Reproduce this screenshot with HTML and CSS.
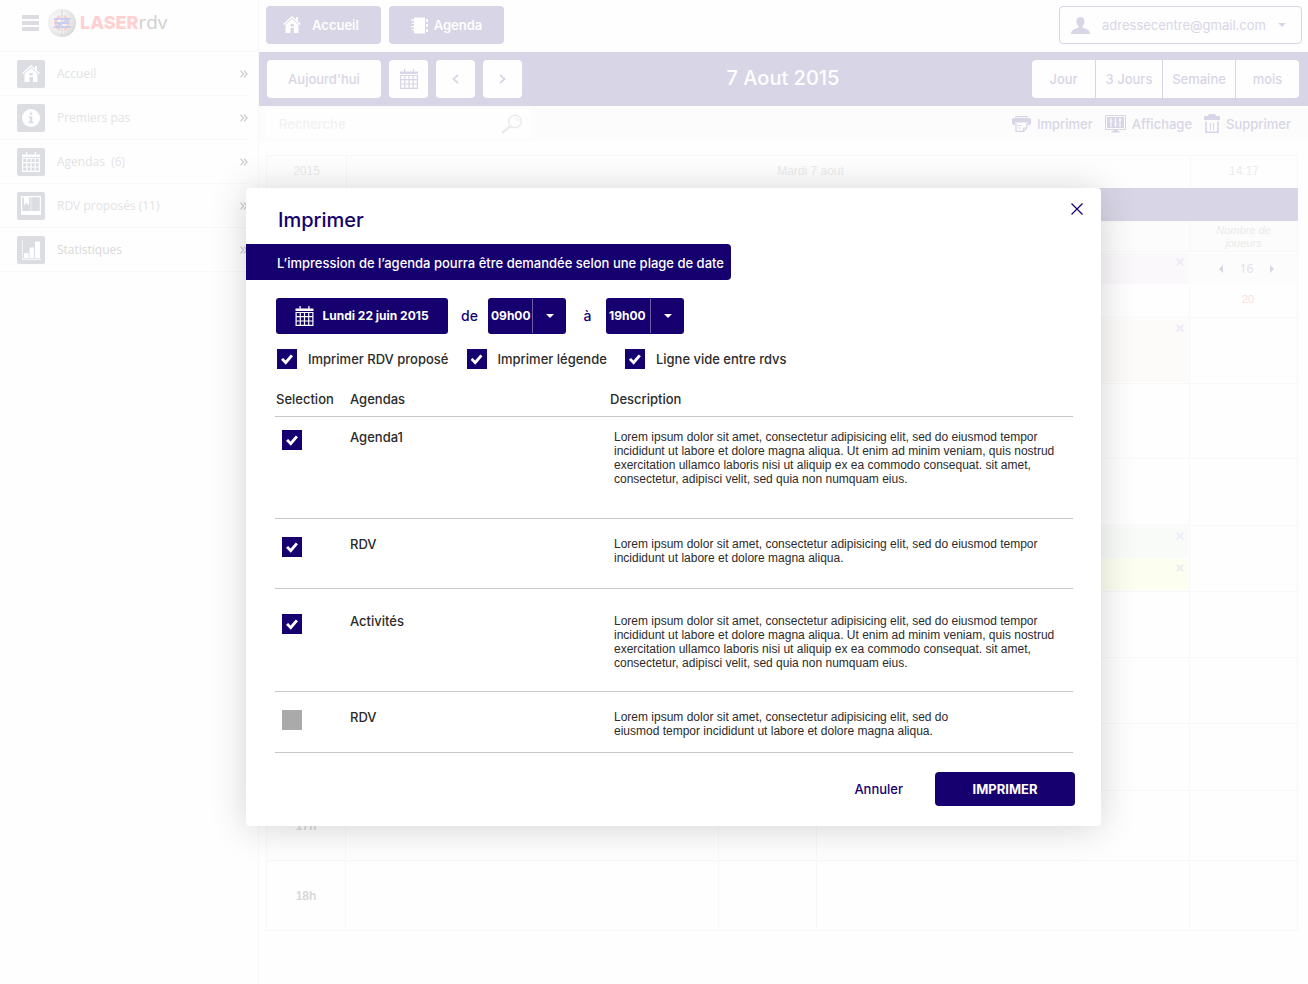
FILE: index.html
```html
<!DOCTYPE html>
<html lang="fr">
<head>
<meta charset="utf-8">
<meta name="viewport" content="width=device-width, initial-scale=1">
<title>LASERrdv – Agenda</title>
<link rel="stylesheet" href="styles.css">
</head>
<body>
<svg class="sprite" aria-hidden="true">
  <symbol id="i-home" viewBox="0 0 18 18">
    <path fill="none" stroke="currentColor" stroke-width="1.4" d="M.6 8.6 9 1l8.400 7.600"/>
    <path fill="currentColor" fill-rule="evenodd" d="M13 1h2v4.500l-2-1.800zM9 3l6.500 5.800V17H11v-5H7.500v5H2.500V8.800zM7.600 8v2.600h3.200V8z"/>
  </symbol>
  <symbol id="i-info" viewBox="0 0 18 18">
    <circle cx="9" cy="9" r="9" fill="currentColor"/>
    <path class="cut" d="M7.800 3.500h2.400v2.300H7.800zM6.500 7.200h3.800v5.600h1.200v1.400h-5v-1.400h1.200V8.600H6.500z"/>
  </symbol>
  <symbol id="i-cal" viewBox="0 0 18 20">
    <path fill="currentColor" d="M4 0h1.200v3H4zM12.800 0H14v3h-1.200zM0 2.500h18V5H0z"/>
    <path fill="none" stroke="currentColor" stroke-width="1.200" d="M.6 6.500h16.800v12.900H.6zM4.800 6.500v13M9 6.500v13M13.200 6.500v13M.6 10.700h16.800M.6 15h16.800"/>
  </symbol>
  <symbol id="i-book" viewBox="0 0 20 19">
    <path fill="none" stroke="currentColor" stroke-width="1.200" d="M.6.6h18.800v17.800H.6z"/>
    <path fill="currentColor" d="M3 1h5v8.500L5.500 7 3 9.500zM1 15h18v3H1z"/>
    <path stroke="currentColor" stroke-width="1" opacity=".6" d="M10 1v14"/>
  </symbol>
  <symbol id="i-chart" viewBox="0 0 19 20">
    <path fill="none" stroke="currentColor" stroke-dasharray="1.500 1" d="M.5 0v19"/>
    <path fill="currentColor" d="M2 13h4.500v5H2zM7.500 7.500H12V18H7.500zM13 1.500h5V18h-5zM0 18.800h19v1H0z"/>
  </symbol>
  <symbol id="i-note" viewBox="0 0 18 17">
    <path fill="currentColor" d="M3 .5h11v16H3zM0 2.500h5v1.200H0zM1 5.800h4V7H1zM0 9h5v1.200H0zM1 12.300h4v1.200H1zM15 2h2v3h-2zM15 7h2v3h-2zM15 12h2v3h-2z"/>
  </symbol>
  <symbol id="i-user" viewBox="0 0 19 17">
    <path fill="currentColor" d="M9.500 0c2.500 0 4 1.700 4 4.300 0 2.200-.8 4-2 5v1.500c2.800.8 7.500 1.700 7.500 6.200H0c0-4.500 4.700-5.400 7.500-6.200V9.300c-1.200-1-2-2.800-2-5C5.500 1.700 7 0 9.500 0z"/>
  </symbol>
  <symbol id="i-search" viewBox="0 0 22 20">
    <circle cx="14" cy="7.500" r="6.300" fill="none" stroke="currentColor" stroke-width="1.500"/>
    <path fill="none" stroke="currentColor" d="M14 4a3.500 3.500 0 0 1 3.500 3.500"/>
    <path stroke="currentColor" stroke-width="2.600" stroke-linecap="round" d="M9 12.500 2 18"/>
  </symbol>
  <symbol id="i-print" viewBox="0 0 19 16">
    <path fill="currentColor" d="M3 0h13v1.300H3zM1 2h17l1 1v4.500L17.500 9H16V6.500H3V9H1.500L0 7.500V3z"/>
    <path fill="none" stroke="currentColor" stroke-width="1.200" d="M4 7v8.400h7.500L15 12V7M15 12h-3.500v3.400M5.500 9.500h4M5.500 12h3"/>
  </symbol>
  <symbol id="i-screen" viewBox="0 0 21 18">
    <path fill="none" stroke="currentColor" d="M.5.5h20v14H.5z"/>
    <path fill="currentColor" d="M2 2h17v11H2zM8.500 14.500h4V16h2v1.500h-8V16h2z"/>
    <path stroke="#fcfcfc" stroke-width="1.200" d="M6 3v9M10.500 3v9M15 3v9M4.500 6h3M9 9h3M13.500 5h3"/>
  </symbol>
  <symbol id="i-trash" viewBox="0 0 16 19">
    <path fill="currentColor" d="M5 0h6l1 2h3l1 1v3H0V3l1-1h3z"/>
    <path fill="none" stroke="currentColor" stroke-width="1.600" d="M2 7.500v10.700h12V7.500"/>
    <path fill="none" stroke="currentColor" d="M6.500 9v7M9.500 9v7"/>
  </symbol>
  <symbol id="i-chevrons" viewBox="0 0 8 8">
    <path fill="none" stroke="currentColor" stroke-width="1.400" d="m.6.600 3 3.400-3 3.400M4 .6 7 4 4 7.400"/>
  </symbol>
  <symbol id="i-left" viewBox="0 0 7 10"><path fill="none" stroke="currentColor" stroke-width="1.800" d="M6 .8 1.500 5 6 9.200"/></symbol>
  <symbol id="i-right" viewBox="0 0 7 10"><path fill="none" stroke="currentColor" stroke-width="1.800" d="M1 .8 5.500 5 1 9.200"/></symbol>
  <symbol id="i-caret" viewBox="0 0 8 4"><path fill="currentColor" d="M0 0h8L4 4z"/></symbol>
  <symbol id="i-x" viewBox="0 0 8 8"><path fill="none" stroke="currentColor" stroke-width="1.800" d="m.6.600 6.800 6.800M7.400.6.6 7.400"/></symbol>
</svg>

<div class="app">
  <aside class="sidebar">
    <div class="brand">
      <button class="burger" type="button" aria-label="Menu"><span></span><span></span><span></span></button>
      <svg class="brand-mark" viewBox="0 0 28 28" aria-hidden="true">
        <defs><radialGradient id="ball" cx=".35" cy=".4" r=".7"><stop offset="0" stop-color="#fafafa"/><stop offset=".6" stop-color="#ececec"/><stop offset="1" stop-color="#d6d6d6"/></radialGradient></defs>
        <circle cx="14" cy="14" r="14" fill="url(#ball)"/>
        <circle cx="14" cy="14" r="6.500" fill="none" stroke="#f9cfcf" stroke-width="3"/>
        <path stroke="#fafafa" stroke-width="3" d="M14 3v22"/>
        <path stroke="#cdcdd4" stroke-width="1" d="M14 2v24"/>
        <path fill="none" stroke="#c9cdf0" stroke-width="2" d="M6 10h15L8 18h15M7 14h14"/>
      </svg>
      <span class="brand-name"><b>LASER</b>rdv</span>
    </div>
    <nav>
      <a class="nav-item" href="#"><span class="nav-icon"><svg width="18" height="18"><use href="#i-home"/></svg></span><span>Accueil</span><svg class="more" width="8" height="8"><use href="#i-chevrons"/></svg></a>
      <a class="nav-item" href="#"><span class="nav-icon"><svg width="18" height="18"><use href="#i-info"/></svg></span><span>Premiers pas</span><svg class="more" width="8" height="8"><use href="#i-chevrons"/></svg></a>
      <a class="nav-item" href="#"><span class="nav-icon"><svg width="18" height="20"><use href="#i-cal"/></svg></span><span>Agendas&nbsp; (6)</span><svg class="more" width="8" height="8"><use href="#i-chevrons"/></svg></a>
      <a class="nav-item" href="#"><span class="nav-icon"><svg width="20" height="19"><use href="#i-book"/></svg></span><span>RDV proposés (11)</span><svg class="more" width="8" height="8"><use href="#i-chevrons"/></svg></a>
      <a class="nav-item current" href="#"><span class="nav-icon"><svg width="19" height="20"><use href="#i-chart"/></svg></span><span>Statistiques</span><svg class="more" width="8" height="8"><use href="#i-chevrons"/></svg></a>
    </nav>
  </aside>

  <main class="main">
    <header class="topbar">
      <button class="tab" type="button"><svg width="18" height="18"><use href="#i-home"/></svg>Accueil</button>
      <button class="tab" type="button"><svg width="18" height="17"><use href="#i-note"/></svg>Agenda</button>
      <button class="account" type="button"><svg width="19" height="17"><use href="#i-user"/></svg><span>adressecentre@gmail.com</span><svg width="8" height="4"><use href="#i-caret"/></svg></button>
    </header>

    <div class="datebar">
      <div class="date-nav">
        <button class="today" type="button">Aujourd'hui</button>
        <button class="square" type="button" aria-label="Calendrier"><svg width="18" height="20"><use href="#i-cal"/></svg></button>
        <button class="square" type="button" aria-label="Précédent"><svg width="7" height="10"><use href="#i-left"/></svg></button>
        <button class="square" type="button" aria-label="Suivant"><svg width="7" height="10"><use href="#i-right"/></svg></button>
      </div>
      <h1>7 Aout 2015</h1>
      <div class="views">
        <button type="button">Jour</button><button type="button">3 Jours</button><button type="button">Semaine</button><button type="button">mois</button>
      </div>
    </div>

    <div class="tools">
      <label class="search"><input type="text" placeholder="Recherche" aria-label="Recherche"><svg width="22" height="20"><use href="#i-search"/></svg></label>
      <div class="actions">
        <button type="button"><svg width="19" height="16"><use href="#i-print"/></svg>Imprimer</button>
        <button type="button"><svg width="21" height="18"><use href="#i-screen"/></svg>Affichage</button>
        <button type="button"><svg width="16" height="19"><use href="#i-trash"/></svg>Supprimer</button>
      </div>
    </div>

    <div class="planner">
      <div class="day-head"><span>2015</span><span class="day">Mardi 7 aout</span><span>14:17</span></div>
      <div class="day-band"></div>
      <table class="slots">
        <colgroup><col class="c-hour"><col><col class="c-mid"><col><col class="c-count"></colgroup>
        <thead><tr><th></th><th></th><th></th><th></th><th>Nombre de joueurs</th></tr></thead>
        <tbody>
          <tr class="h66"><td></td><td></td><td></td><td><div class="event lilac"><svg width="8" height="8"><use href="#i-x"/></svg></div></td>
            <td><div class="stepper"><button type="button" aria-label="Moins"><svg width="4" height="8" viewBox="0 0 4 8"><path fill="currentColor" d="M4 0v8L0 4z"/></svg></button>16<button type="button" aria-label="Plus"><svg width="4" height="8" viewBox="0 0 4 8"><path fill="currentColor" d="M0 0v8l4-4z"/></svg></button></div><div class="limit">20</div></td></tr>
          <tr class="h66"><td></td><td></td><td></td><td><div class="event tall sand"><svg width="8" height="8"><use href="#i-x"/></svg></div></td><td></td></tr>
          <tr class="h75"><td></td><td></td><td></td><td></td><td></td></tr>
          <tr class="h67"><td></td><td></td><td></td><td></td><td></td></tr>
          <tr class="h66"><td></td><td></td><td></td><td><div class="event mint"><svg width="8" height="8"><use href="#i-x"/></svg></div><div class="event lemon"><svg width="8" height="8"><use href="#i-x"/></svg></div></td><td></td></tr>
          <tr class="h66"><td></td><td></td><td></td><td></td><td></td></tr>
          <tr class="h66"><td></td><td></td><td></td><td></td><td></td></tr>
          <tr class="h67"><td></td><td></td><td></td><td></td><td></td></tr>
          <tr class="h70"><td class="hour">17h</td><td></td><td></td><td></td><td></td></tr>
          <tr class="h70"><td class="hour">18h</td><td></td><td></td><td></td><td></td></tr>
        </tbody>
      </table>
    </div>
  </main>
</div>

<div class="layer">
  <form class="modal" role="dialog" aria-labelledby="modal-title">
    <div class="modal-head">
      <h2 id="modal-title">Imprimer</h2>
      <button class="close" type="button" aria-label="Fermer"><svg width="12" height="12" viewBox="0 0 12 12"><path fill="none" stroke="currentColor" stroke-width="1.200" d="m.5.500 11 11M11.500.5l-11 11"/></svg></button>
    </div>
    <p class="banner">L’impression de l’agenda pourra être demandée selon une plage de date</p>
    <div class="range">
      <button class="date" type="button"><svg width="19" height="20"><use href="#i-cal"/></svg>Lundi 22 juin 2015</button>
      <label for="from">de</label>
      <span class="time"><select id="from"><option>09h00</option></select><span class="drop"><svg width="8" height="4"><use href="#i-caret"/></svg></span></span>
      <label for="to">à</label>
      <span class="time"><select id="to"><option>19h00</option></select><span class="drop"><svg width="8" height="4"><use href="#i-caret"/></svg></span></span>
    </div>
    <div class="options">
      <label><input class="check" type="checkbox" checked>Imprimer RDV proposé</label>
      <label><input class="check" type="checkbox" checked>Imprimer légende</label>
      <label><input class="check" type="checkbox" checked>Ligne vide entre rdvs</label>
    </div>
    <table class="list">
      <colgroup><col class="l-sel"><col class="l-name"><col></colgroup>
      <thead><tr><th>Selection</th><th>Agendas</th><th>Description</th></tr></thead>
      <tbody>
        <tr class="first"><td class="sel"><input class="check" id="a1" type="checkbox" checked></td><td><label for="a1">Agenda1</label></td><td class="desc">Lorem ipsum dolor sit amet, consectetur adipisicing elit, sed do eiusmod tempor incididunt ut labore et dolore magna aliqua. Ut enim ad minim veniam, quis nostrud exercitation ullamco laboris nisi ut aliquip ex ea commodo consequat. sit amet, consectetur, adipisci velit, sed quia non numquam eius.</td></tr>
        <tr class="second"><td class="sel"><input class="check" id="a2" type="checkbox" checked></td><td><label for="a2">RDV</label></td><td class="desc">Lorem ipsum dolor sit amet, consectetur adipisicing elit, sed do eiusmod tempor incididunt ut labore et dolore magna aliqua.</td></tr>
        <tr class="third"><td class="sel"><input class="check" id="a3" type="checkbox" checked></td><td><label for="a3">Activités</label></td><td class="desc">Lorem ipsum dolor sit amet, consectetur adipisicing elit, sed do eiusmod tempor incididunt ut labore et dolore magna aliqua. Ut enim ad minim veniam, quis nostrud exercitation ullamco laboris nisi ut aliquip ex ea commodo consequat. sit amet, consectetur, adipisci velit, sed quia non numquam eius.</td></tr>
        <tr class="fourth"><td class="sel"><input class="check" id="a4" type="checkbox"></td><td><label for="a4">RDV</label></td><td class="desc narrow">Lorem ipsum dolor sit amet, consectetur adipisicing elit, sed do eiusmod tempor incididunt ut labore et dolore magna aliqua.</td></tr>
      </tbody>
    </table>
    <div class="modal-foot">
      <button class="cancel" type="button">Annuler</button>
      <button class="submit" type="submit">IMPRIMER</button>
    </div>
  </form>
</div>
</body>
</html>
```
FILE: styles.css
```css
:root {
  --navy: #16006f;
  --haze: #d8d5e6;
  --line: #f8f8f8;
}
* { box-sizing: border-box; }
body {
  margin: 0;
  min-height: 100vh;
  position: relative;
  background: #fefefe;
  font: 500 13px/16px Inter, "Liberation Sans", sans-serif;
}
button, input, select { font: inherit; color: inherit; }
button { border: 0; padding: 0; background: none; cursor: pointer; }
svg { display: block; flex: none; }
a { text-decoration: none; }
.sprite { position: absolute; width: 0; height: 0; }

.app { display: flex; min-height: 100vh; }

/* Sidebar */
.sidebar { width: 259px; flex: none; border-right: 1px solid var(--line); }
.brand { display: flex; align-items: center; height: 52px; padding: 0 0 6px 22px; border-bottom: 1px solid var(--line); }
.burger { display: grid; gap: 2px; width: 17px; margin-right: 9px; }
.burger span { height: 4px; background: #dcdde2; }
.brand-mark { width: 28px; height: 28px; margin-right: 4px; }
.brand-name { color: #cfcfcf; font: 400 19px/24px "Open Sans", sans-serif; }
.brand-name b { color: #ffd0d0; font: 800 18px/24px Inter, sans-serif; }
.nav-item {
  display: flex; align-items: center; height: 44px; margin-right: 8px; padding: 0 2px 0 17px;
  border-bottom: 1px solid var(--line); color: #e3e3e3; font: 400 12px/16px "Open Sans", sans-serif;
}
.nav-item.current { color: #d8d8d8; }
.nav-icon {
  display: flex; align-items: center; justify-content: center; width: 28px; height: 28px;
  margin-right: 12px; border-radius: 2px; background: #dcdde2; color: #fefefe;
}
.cut { fill: #dcdde2; }
.more { margin-left: auto; color: #cfcfcf; }

/* Top bars */
.main { flex: 1; min-width: 0; }
.topbar { display: flex; gap: 8px; height: 52px; padding: 6px 6px 8px 7px; }
.tab {
  display: flex; align-items: center; justify-content: center; gap: 11px; width: 115px; padding-right: 5px;
  border-radius: 4px; background: var(--haze); color: #fefefe; font-weight: 600;
}
.tab + .tab { gap: 5px; padding-right: 0; }
.account {
  display: flex; align-items: center; gap: 12px; width: 243px; margin-left: auto; padding: 0 16px 0 11px;
  border: 1px solid var(--haze); border-radius: 4px; color: var(--haze);
}
.account span { flex: 1; text-align: left; font-weight: 400; }
.datebar {
  display: grid; grid-template-columns: 1fr auto 1fr; align-items: center;
  height: 54px; padding: 0 9px 0 8px; background: var(--haze); color: var(--haze);
}
.date-nav { display: flex; gap: 8px; }
.date-nav button { display: flex; align-items: center; justify-content: center; height: 38px; border-radius: 4px; background: #fefefe; }
.date-nav .today { width: 114px; }
.date-nav .square { width: 39px; }
.datebar h1 { margin: 0; padding-bottom: 3px; color: #fefefe; font: 500 20px/24px Inter, sans-serif; }
.views { display: flex; gap: 1px; justify-self: end; border-radius: 4px; overflow: hidden; }
.views button { width: 63px; height: 38px; background: #fefefe; }
.views button:nth-child(2) { width: 66px; }
.views button:nth-child(3) { width: 72px; }
.tools { display: flex; align-items: center; justify-content: space-between; height: 35px; padding: 0 17px 0 7px; background: #fcfcfc; }
.search { display: flex; align-items: center; width: 266px; height: 29px; padding: 0 9px 0 13px; border-radius: 4px; background: #fefefe; color: #ebebeb; }
.search input { flex: 1; min-width: 0; border: 0; padding: 0; outline: 0; background: none; }
.search input::placeholder { color: #f2f2f2; opacity: 1; }
.actions { display: flex; gap: 12px; color: var(--haze); }
.actions button { display: flex; align-items: center; gap: 6px; height: 24px; }

/* Planner */
.planner { padding: 14px 10px 0 7px; color: #ebebeb; font: 400 12px/16px "Liberation Sans", Arial, sans-serif; }
.day-head { display: grid; grid-template-columns: 79px 1fr 107px; height: 33px; border: 1px solid var(--line); border-bottom: 0; text-align: center; line-height: 30px; }
.day-head span + span { border-left: 1px solid var(--line); }
.day-head .day { padding-left: 84px; }
.day-band { height: 33px; background: var(--haze); }
.slots { width: 100%; table-layout: fixed; border-collapse: collapse; }
.slots th, .slots td { padding: 0; border: 1px solid var(--line); vertical-align: top; }
.slots th { height: 30px; padding: 0 20px; background: #fcfcfc; font: italic 400 11px/13px "Liberation Sans", sans-serif; vertical-align: middle; }
.c-hour { width: 79px; }
.c-mid { width: 98px; }
.c-count { width: 108px; }
.h66 { height: 66px; }
.h67 { height: 67px; }
.h70 { height: 70px; }
.h75 { height: 75px; }
.slots .hour { color: #d9d9d9; font-weight: 700; text-align: center; vertical-align: middle; }
.event { display: flex; justify-content: flex-end; height: 31px; margin: 1px; padding: 5px 4px; color: #ecebf5; }
.event.tall { height: 63px; }
.lilac { background: #faf8fb; }
.sand { background: #fcfbf9; }
.mint { background: #f9fbf9; }
.lemon { background: #fcfff0; }
.stepper { display: flex; align-items: center; justify-content: center; gap: 17px; height: 31px; margin: 1px; padding-left: 6px; background: #fcfcfc; color: #e3e1ee; font: 400 12px/16px "Noto Sans", sans-serif; }
.stepper button { color: var(--haze); }
.limit { padding: 6px 0 0 9px; color: #fcdcdf; text-align: center; font-size: 11px; }

/* Print dialog */
.layer { position: absolute; inset: 0; padding: 188px 207px 0 246px; }
.modal { padding-bottom: 20px; border-radius: 4px; background: #fff; box-shadow: 0 2px 36px rgba(0, 0, 0, .17); color: #2b2b2b; }
.modal-head { display: flex; justify-content: space-between; align-items: flex-start; height: 56px; padding: 15px 18px 0 32px; color: var(--navy); }
.modal-head h2 { margin: 5px 0 0; font: 500 20px/24px Inter, sans-serif; }
.close { display: flex; padding: 0 0 4px; }
.banner { width: 485px; margin: 0; padding: 11px 0 9px 31px; border-radius: 0 4px 4px 0; background: var(--navy); color: #fff; white-space: nowrap; }
.range { display: flex; align-items: center; margin: 18px 0 0 30px; color: var(--navy); }
.range > label { width: 40px; padding-left: 3px; text-align: center; font-size: 14px; }
.date { display: flex; align-items: center; justify-content: center; gap: 8px; width: 172px; height: 36px; border-radius: 3px; background: var(--navy); color: #fff; font-size: 12px; font-weight: 700; }
.time { position: relative; width: 78px; height: 36px; color: #fff; }
.time select { appearance: none; width: 100%; height: 100%; padding: 0 0 0 3px; border: 0; border-radius: 3px; background: var(--navy); font-size: 12px; font-weight: 700; }
.drop { position: absolute; inset: 1px 0 1px 44px; display: flex; align-items: center; justify-content: center; border-left: 1px solid #6b5da6; pointer-events: none; }
.options { display: flex; gap: 18px; padding: 15px 0 0 31px; }
.options label { display: flex; align-items: center; gap: 11px; }
.check { appearance: none; display: block; flex: none; width: 20px; height: 20px; margin: 0; padding: 5px 4px; background: #aaa; }
.check:checked { background: var(--navy); }
.check:checked::before { content: ""; display: block; width: 12px; height: 11px; background: #fff; clip-path: polygon(0 52%, 18% 36%, 38% 58%, 82% 4%, 100% 20%, 40% 98%); }

.list { width: calc(100% - 57px); margin: 12px 28px 0 29px; border-collapse: collapse; table-layout: fixed; }
.l-sel { width: 75px; }
.l-name { width: 260px; }
.list th, .list td { padding: 0; text-align: left; vertical-align: top; font-weight: 500; line-height: 14px; }
.list th { padding: 11px 0 10px; }
.list th:first-child { padding-left: 1px; }
.list tr { border-bottom: 1px solid #c6c6cc; }
.list .sel { padding-left: 7px; }
.list .desc { padding-left: 4px; font: 400 12px/14px "Liberation Sans", Arial, sans-serif; }
.list .narrow { padding-right: 90px; }
.first { height: 102px; }
.first td { padding-top: 13px; }
.second { height: 70px; }
.second td { padding-top: 18px; }
.third { height: 103px; }
.third td { padding-top: 25px; }
.fourth { height: 61px; }
.fourth td { padding-top: 18px; }
.modal-foot { display: flex; justify-content: flex-end; align-items: center; gap: 32px; padding: 19px 26px 0 0; }
.cancel { color: var(--navy); }
.submit { width: 140px; height: 34px; border-radius: 4px; background: var(--navy); color: #fff; font-weight: 700; }
```
